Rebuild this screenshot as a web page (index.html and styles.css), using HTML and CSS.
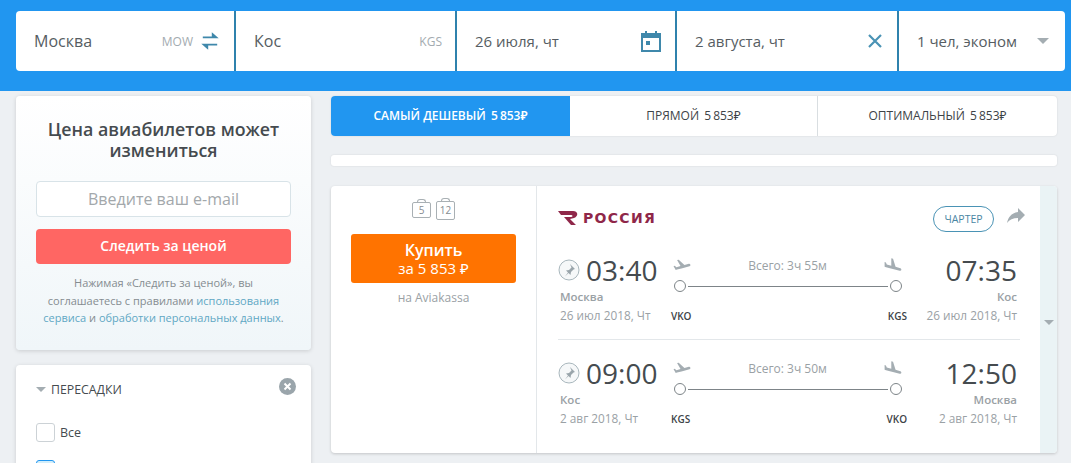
FILE: index.html
```html
<!DOCTYPE html>
<html lang="ru">
<head>
    <meta charset="UTF-8">
    <meta name="viewport" content="width=device-width, initial-scale=1.0">
    <title>Москва — Кос</title>
    <link rel="stylesheet" href="styles.css">
</head>
<body>
    <div class="header">
        <div class="search">
            <div class="field field-from">
                <span class="field-text">Москва</span>
                <span class="iata">MOW</span>
                <svg class="swap" width="18" height="18" viewBox="0 0 20 20"><path d="M2 6h15M13 2.500 17 6H13zM18 14H3M7 17.500 3 14h4z" fill="#3f88ab" stroke="#3f88ab" stroke-width="2"/></svg>
            </div>
            <div class="field">
                <span class="field-text">Кос</span>
                <span class="iata">KGS</span>
            </div>
            <div class="field field-date">
                <span class="field-text">26 июля, чт</span>
                <svg width="20" height="22" viewBox="0 0 20 22"><path d="M1 4h18v17H1zM5 1v4M15 1v4" fill="none" stroke="#3f88ab" stroke-width="2"/><path d="M1 3h18v5H1z" fill="#3f88ab"/><path d="M5 11h4v4H5z" fill="#3f88ab"/></svg>
            </div>
            <div class="field field-date">
                <span class="field-text">2 августа, чт</span>
                <svg width="16" height="16" viewBox="0 0 16 16"><path d="M2 2l12 12M14 2 2 14" stroke="#4a93b5" stroke-width="2.200"/></svg>
            </div>
            <div class="field field-last">
                <span class="field-text">1 чел, эконом</span>
                <span class="caret"></span>
            </div>
        </div>
    </div>

    <div class="main">
        <div class="sidebar">
            <div class="card subscribe">
                <h2>Цена авиабилетов может измениться</h2>
                <div class="email">Введите ваш e-mail</div>
                <div class="red-btn">Следить за ценой</div>
                <p>Нажимая «Следить за ценой», вы<br>соглашаетесь с правилами <a href="#">использования<br>сервиса</a> и <a href="#">обработки персональных данных</a>.</p>
            </div>
            <div class="card filters">
                <div class="filter-head">
                    <span class="caret caret-small"></span>
                    <span class="filter-title">ПЕРЕСАДКИ</span>
                    <svg class="filter-clear" width="17" height="17" viewBox="0 0 17 17"><circle cx="8.500" cy="8.500" r="8.500" fill="#9aa5ab"/><path d="M5.500 5.500l6 6M11.500 5.500l-6 6" stroke="#fff" stroke-width="2"/></svg>
                </div>
                <div class="check-row"><span class="check"></span>Все</div>
                <div class="check-row"><span class="check check-on"></span></div>
            </div>
        </div>

        <div class="results">
            <div class="tabs">
                <div class="tab tab-active">Самый дешевый <span class="price">5 853₽</span></div>
                <div class="tab">Прямой <span class="price">5 853₽</span></div>
                <div class="tab">Оптимальный <span class="price">5 853₽</span></div>
            </div>
            <div class="thin-bar"></div>

            <div class="ticket">
                <div class="buy">
                    <div class="bags">
                        <span class="bag">5</span>
                        <span class="bag bag-case">12</span>
                    </div>
                    <div class="buy-btn">
                        <b>Купить</b>
                        <span>за 5 853 ₽</span>
                    </div>
                    <div class="seller">на Aviakassa</div>
                </div>

                <div class="flights">
                    <div class="carrier">
                        <div class="logo">
                            <svg width="21" height="16" viewBox="0 0 21 16"><path d="M0 1h15c5 0 6 5 1 7l-4 1 6 6h-5L6 7h7c2 0 2-2 0-2H3z" fill="#8f2749"/></svg>
                            <span>РОССИЯ</span>
                        </div>
                        <span class="pill">ЧАРТЕР</span>
                        <svg class="share" width="18" height="15" viewBox="3 5 18 15"><path d="M14 9V5l7 7-7 7v-4.100c-5 0-8.500 1.600-11 5.100 1-5 4-10 11-11z" fill="#a4adb2"/></svg>
                    </div>

                    <div class="flight">
                        <div class="point">
                            <div class="time-line">
                                <svg class="pin" width="22" height="22" viewBox="0 0 22 22"><circle cx="11" cy="11" r="10" fill="#f6f8f9" stroke="#a9b7bd"/><path d="M12 5l5 5-1.500.5-2.500 2.500-.5 3-2-2-3.500 3.500 3-4-2-2 3-.5 2.500-2.500z" fill="#9aa5ab"/></svg>
                                <span class="time">03:40</span>
                            </div>
                            <div class="city">Москва</div>
                            <div class="date">26 июл 2018, Чт</div>
                        </div>
                        <div class="route">
                            <div class="route-top">
                                <svg width="20" height="14" viewBox="0 3 24 14"><path d="M22.070 9.640c-.210-.800-1.040-1.280-1.840-1.060L14.920 10l-6.900-6.430-1.930.510 4.140 7.170-4.970 1.330-1.970-1.540-1.450.390 1.820 3.160.770 1.330 1.600-.430 5.310-1.420 4.350-1.160L21 11.490c.810-.230 1.280-1.050 1.070-1.850z" fill="#a4adb2"/></svg>
                                <span class="total">Всего: 3ч 55м</span>
                                <svg width="20" height="14" viewBox="1 2 22 15"><path d="M9.680 13.270l4.350 1.160 5.310 1.420c.800.210 1.620-.260 1.840-1.060.210-.800-.260-1.620-1.060-1.840l-5.310-1.420-2.760-9.020L10.120 2v8.280L5.150 8.950l-.930-2.320-1.450-.390v5.170l1.600.430 5.310 1.430z" fill="#a4adb2"/></svg>
                            </div>
                            <div class="line"><i></i><b></b><i></i></div>
                            <div class="codes"><span>VKO</span><span>KGS</span></div>
                        </div>
                        <div class="point point-end">
                            <div class="time-line"><span class="time">07:35</span></div>
                            <div class="city">Кос</div>
                            <div class="date">26 июл 2018, Чт</div>
                        </div>
                    </div>

                    <div class="flight flight-back">
                        <div class="point">
                            <div class="time-line">
                                <svg class="pin" width="22" height="22" viewBox="0 0 22 22"><circle cx="11" cy="11" r="10" fill="#f6f8f9" stroke="#a9b7bd"/><path d="M12 5l5 5-1.500.5-2.500 2.500-.5 3-2-2-3.500 3.500 3-4-2-2 3-.5 2.500-2.500z" fill="#9aa5ab"/></svg>
                                <span class="time">09:00</span>
                            </div>
                            <div class="city">Кос</div>
                            <div class="date">2 авг 2018, Чт</div>
                        </div>
                        <div class="route">
                            <div class="route-top">
                                <svg width="20" height="14" viewBox="0 3 24 14"><path d="M22.070 9.640c-.210-.800-1.040-1.280-1.840-1.060L14.920 10l-6.900-6.430-1.930.510 4.140 7.170-4.970 1.330-1.970-1.540-1.450.390 1.820 3.160.770 1.330 1.600-.430 5.310-1.420 4.350-1.160L21 11.490c.810-.230 1.280-1.050 1.070-1.850z" fill="#a4adb2"/></svg>
                                <span class="total">Всего: 3ч 50м</span>
                                <svg width="20" height="14" viewBox="1 2 22 15"><path d="M9.680 13.270l4.350 1.160 5.310 1.420c.800.210 1.620-.260 1.840-1.060.210-.800-.260-1.620-1.060-1.840l-5.310-1.420-2.760-9.020L10.120 2v8.280L5.150 8.950l-.930-2.320-1.450-.390v5.170l1.600.430 5.310 1.430z" fill="#a4adb2"/></svg>
                            </div>
                            <div class="line"><i></i><b></b><i></i></div>
                            <div class="codes"><span>KGS</span><span>VKO</span></div>
                        </div>
                        <div class="point point-end">
                            <div class="time-line"><span class="time">12:50</span></div>
                            <div class="city">Москва</div>
                            <div class="date">2 авг 2018, Чт</div>
                        </div>
                    </div>
                </div>

                <div class="more"><span class="caret caret-small"></span></div>
            </div>
        </div>
    </div>
</body>
</html>
```

FILE: styles.css
```css
html, body {
    height: 463px;
    overflow: hidden;
}

body {
    margin: 0;
    background-color: #edf0f3;
    font-family: "Open Sans", "Noto Sans", sans-serif;
    color: #444b50;
}

/* search bar */
.header {
    height: 91px;
    box-sizing: border-box;
    padding: 11px 6px 0 16px;
    background-color: #2196f0;
}

.search {
    display: grid;
    grid-template-columns: 220px 221px 220px 222px 1fr;
    height: 60px;
    background-color: #fff;
    border-radius: 4px;
}

.field {
    display: flex;
    align-items: center;
    padding: 0 13px 0 18px;
    border-right: 2px solid #2f82ad;
    box-sizing: border-box;
}

.field-from {
    padding-right: 15px;
}

.field-date {
    justify-content: space-between;
    padding-right: 14px;
}

.field-last {
    border-right: 0;
    justify-content: space-between;
    padding-right: 16px;
}

.field-text {
    flex: 1;
    font-size: 15px;
    color: #565d62;
}

.field:first-child .field-text,
.field:nth-child(2) .field-text {
    font-size: 16px;
}

.iata {
    font-size: 12px;
    color: #a3abb0;
}

.swap {
    margin-left: 8px;
}

.caret {
    width: 0;
    height: 0;
    border-left: 6px solid transparent;
    border-right: 6px solid transparent;
    border-top: 6px solid #a4adb2;
}

.caret-small {
    border-left-width: 5px;
    border-right-width: 5px;
    border-top-width: 5px;
}

/* page columns */
.main {
    display: grid;
    grid-template-columns: 295px 726px;
    gap: 20px;
    padding: 5px 0 0 16px;
}

.card {
    background-color: #fff;
    border-radius: 4px;
    box-shadow: 0 1px 4px rgba(0, 0, 0, 0.15);
}

.subscribe {
    height: 254px;
    box-sizing: border-box;
    padding: 23px 20px 0;
    text-align: center;
    background: linear-gradient(#fff, #f0f6f9);
}

.subscribe h2 {
    margin: 0 0 20px;
    font-size: 17.800px;
    line-height: 21px;
    font-weight: 600;
    color: #454b4f;
}

.email {
    height: 36px;
    line-height: 34px;
    box-sizing: border-box;
    border: 1px solid #d8e3e8;
    border-radius: 4px;
    background-color: #fff;
    font-size: 16px;
    color: #a3a8ab;
}

.red-btn {
    height: 35px;
    line-height: 34px;
    margin-top: 12px;
    border-radius: 4px;
    background-color: #ff6663;
    color: #fff;
    font-size: 14px;
    font-weight: 600;
}

.subscribe p {
    margin: 10px -6px 0;
    font-size: 11px;
    line-height: 17.500px;
    color: #858c91;
}

.subscribe a {
    color: #5fa7c4;
    text-decoration: none;
}

.filters {
    margin-top: 15px;
    height: 120px;
    padding: 0 20px;
}

.filter-head {
    display: flex;
    align-items: center;
    gap: 5px;
    height: 49px;
    box-sizing: border-box;
}

.filter-title {
    flex: 1;
    font-size: 12.300px;
    color: #454b4f;
}

.filter-clear {
    margin: -7px -5px 0 0;
}

.check-row {
    display: flex;
    align-items: center;
    gap: 5px;
    height: 19px;
    margin: 9px 0 18px;
    font-size: 12.500px;
    color: #454b4f;
}

.check {
    width: 19px;
    height: 19px;
    box-sizing: border-box;
    border: 1px solid #ccd2d6;
    border-radius: 3px;
    background-color: #fff;
}

.check-on {
    border-color: #2196f0;
    background-color: #d3eefa;
}

/* fare tabs */
.tabs {
    display: grid;
    grid-template-columns: 239px 248px 1fr;
    height: 40px;
    background-color: #fff;
    border-radius: 4px;
    box-shadow: 0 0 2px rgba(0, 0, 0, 0.12);
}

.tab {
    display: flex;
    align-items: center;
    justify-content: center;
    padding-bottom: 2px;
    box-sizing: border-box;
    font-size: 12px;
    text-transform: uppercase;
    white-space: pre;
    color: #3d4347;
    border-right: 1px solid #d9dee1;
}

.tab:last-child {
    border-right: 0;
}

.tab-active {
    background-color: #2196f0;
    border-radius: 4px 0 0 4px;
    border-right: 0;
    color: #fff;
    font-weight: 600;
}

.price {
    margin-left: 2px;
    word-spacing: -1px;
}

.thin-bar {
    height: 11px;
    margin-top: 19px;
    background-color: #fff;
    border-radius: 3px;
    box-shadow: 0 0 2px rgba(0, 0, 0, 0.12);
}

/* ticket */
.ticket {
    display: flex;
    height: 267px;
    margin-top: 20px;
    background-color: #fff;
    border-radius: 4px;
    box-shadow: 0 1px 3px rgba(0, 0, 0, 0.18);
}

.buy {
    width: 206px;
    box-sizing: border-box;
    padding: 11px 20px 0;
    border-right: 1px solid #e3e7ea;
    text-align: center;
}

.bags {
    display: flex;
    justify-content: center;
    gap: 5px;
    height: 35px;
    align-items: flex-start;
    padding-top: 4px;
    box-sizing: border-box;
}

.bag {
    position: relative;
    width: 17px;
    height: 14px;
    margin-top: 1px;
    border: 1px solid #a9b0b4;
    border-radius: 2px;
    font-size: 10px;
    line-height: 14px;
    color: #858c91;
}

.bag::before {
    content: "";
    position: absolute;
    left: 4px;
    right: 4px;
    top: -4px;
    height: 3px;
    border: 1px solid #a9b0b4;
    border-bottom: 0;
    border-radius: 3px 3px 0 0;
    box-sizing: border-box;
}

.bag-case {
    margin-top: 0;
    height: 17px;
    line-height: 17px;
}

.buy-btn {
    display: flex;
    flex-direction: column;
    justify-content: center;
    height: 49px;
    margin-top: 2px;
    border-radius: 3px;
    background-color: #ff7300;
    color: #fff;
    font-size: 15px;
    line-height: 18px;
}

.buy-btn b {
    font-size: 16px;
    font-weight: 600;
}

.seller {
    margin-top: 6px;
    font-size: 12px;
    color: #9aa1a5;
}

.flights {
    flex: 1;
    padding: 20px 20px 0 21px;
}

.carrier {
    display: flex;
    align-items: center;
    height: 26px;
    margin-bottom: 21px;
}

.logo {
    display: flex;
    align-items: center;
    gap: 4px;
    flex: 1;
    margin-top: -2px;
    font-family: "DejaVu Sans", sans-serif;
    font-size: 14px;
    font-weight: 700;
    letter-spacing: 1.300px;
    color: #8f2749;
}

.pill {
    width: 61px;
    height: 26px;
    box-sizing: border-box;
    line-height: 24px;
    border: 1px solid #4a93b5;
    border-radius: 13px;
    text-align: center;
    font-size: 10.500px;
    color: #4a86a3;
}

.share {
    margin: -8px -5px 0 13px;
}

.flight {
    display: grid;
    grid-template-columns: 113px 236px 1fr;
    height: 86px;
    padding-right: 3px;
    border-bottom: 1px solid #e3e7ea;
}

.flight-back {
    height: auto;
    padding-top: 16px;
    border-bottom: 0;
}

.time-line {
    display: flex;
    align-items: center;
    height: 34px;
}

.pin {
    margin-right: 6px;
}

.time {
    font-size: 28px;
    line-height: 34px;
    color: #454b4f;
}

.city {
    margin-top: 1px;
    padding-left: 2px;
    font-size: 11.500px;
    line-height: 18px;
    font-weight: 600;
    color: #9aa1a5;
}

.date {
    padding-left: 2px;
    font-size: 11.800px;
    line-height: 18.500px;
    color: #9aa1a5;
}

.point-end {
    text-align: right;
}

.point-end .time-line {
    justify-content: flex-end;
}

.route-top {
    display: flex;
    align-items: center;
    justify-content: space-between;
    height: 24px;
    padding: 0 4px 0 1px;
}

.total {
    font-size: 12px;
    color: #9aa1a5;
}

.line {
    display: flex;
    align-items: center;
    height: 18px;
    padding: 0 5px 0 3px;
}

.line i {
    width: 12px;
    height: 12px;
    box-sizing: border-box;
    border: 1px solid #7d8488;
    border-radius: 50%;
}

.line b {
    flex: 1;
    height: 1px;
    margin: 0 2px;
    background-color: #7d8488;
}

.codes {
    display: flex;
    justify-content: space-between;
    margin-top: 14px;
    font-size: 10px;
    font-weight: 600;
    color: #3d4347;
}

.more {
    display: flex;
    justify-content: center;
    align-items: center;
    width: 17px;
    padding-top: 6px;
    background-color: #eaf3f5;
    border-radius: 0 4px 4px 0;
}
```
